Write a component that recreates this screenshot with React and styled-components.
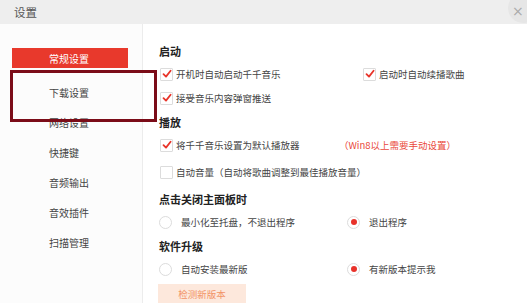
import React from 'react';
import styled, { createGlobalStyle } from 'styled-components';

const GlobalStyle = createGlobalStyle`
    html, body {
        margin: 0;
        padding: 0;
        background: #ffffff;
    }
    body {
        font-family: "Noto Sans CJK SC", "Noto Sans", sans-serif;
        color: #333;
    }
`;

const navItems = ['常规设置', '下载设置', '网络设置', '快捷键', '音频输出', '音效插件', '扫描管理'];

const Check = ({ checked }) => (
    <CheckBox>
        {checked && (
            <svg width="10" height="10" viewBox="0 0 10 10">
                <path d="M1.5 5.2 L4 7.6 L8.6 1.8" fill="none" stroke="#e8342a" strokeWidth="1.8" strokeLinecap="round" strokeLinejoin="round" />
            </svg>
        )}
    </CheckBox>
);

const Radio = ({ checked }) => (
    <RadioDot>{checked && <RadioInner />}</RadioDot>
);

const App = () => {
    return (
        <>
            <GlobalStyle />
            <Window>
                <TitleBar>
                    <Title>设置</Title>
                    <CloseButton>×</CloseButton>
                </TitleBar>
                <Body>
                    <Sidebar>
                        {navItems.map((item, index) => (
                            <NavItem key={item} $active={index === 0}>{item}</NavItem>
                        ))}
                    </Sidebar>
                    <Content>
                        <Heading>启动</Heading>
                        <Row $col={203}>
                            <Option><Check checked /><Label>开机时自动启动千千音乐</Label></Option>
                            <Option><Check checked /><Label>启动时自动续播歌曲</Label></Option>
                        </Row>
                        <Row>
                            <Option><Check checked /><Label>接受音乐内容弹窗推送</Label></Option>
                        </Row>

                        <Heading>播放</Heading>
                        <Row $col={180}>
                            <Option><Check checked /><Label>将千千音乐设置为默认播放器</Label></Option>
                            <Note>（Win8以上需要手动设置）</Note>
                        </Row>
                        <Row $h={30}>
                            <Option><Check /><Label>自动音量（自动将歌曲调整到最佳播放音量）</Label></Option>
                        </Row>

                        <Heading>点击关闭主面板时</Heading>
                        <Row $col={188}>
                            <Option><Radio /><RadioLabel>最小化至托盘，不退出程序</RadioLabel></Option>
                            <Option><Radio checked /><RadioLabel>退出程序</RadioLabel></Option>
                        </Row>

                        <Heading>软件升级</Heading>
                        <Row $col={188}>
                            <Option><Radio /><RadioLabel>自动安装最新版</RadioLabel></Option>
                            <Option><Radio checked /><RadioLabel>有新版本提示我</RadioLabel></Option>
                        </Row>
                        <CheckButton>检测新版本</CheckButton>
                    </Content>
                    <Highlight />
                </Body>
            </Window>
        </>
    );
};

export default App;

const Window = styled.div`
    width: 527px;
    height: 303px;
    overflow: hidden;
    display: flex;
    flex-direction: column;
    background: #ffffff;
`;

const TitleBar = styled.div`
    height: 24px;
    flex-shrink: 0;
    display: flex;
    align-items: center;
    justify-content: space-between;
    background: #eeeeee;
    overflow: hidden;
`;

const Title = styled.div`
    padding-left: 14px;
    font-size: 11.5px;
    color: #555;
`;

const CloseButton = styled.div`
    width: 30px;
    height: 30px;
    margin-right: -11px;
    margin-top: -8px;
    border-radius: 50%;
    background: #e6e6e6;
    color: #aaa;
    font-size: 14px;
    line-height: 30px;
    padding-left: 4px;
    padding-top: 3px;
    box-sizing: border-box;
    font-family: "DejaVu Sans", sans-serif;
`;

const Body = styled.div`
    position: relative;
    flex: 1;
    display: flex;
    min-height: 0;
`;

const Sidebar = styled.div`
    width: 143px;
    flex-shrink: 0;
    padding: 24px 0 0 12px;
    box-sizing: border-box;
    background: #fcfcfc;
    border-right: 1px solid #ececec;
`;

const NavItem = styled.div`
    width: 116px;
    height: ${p => (p.$active ? '20px' : '30px')};
    margin-bottom: ${p => (p.$active ? '9px' : '0')};
    padding-left: 37px;
    box-sizing: border-box;
    display: flex;
    align-items: center;
    font-size: 10px;
    color: ${p => (p.$active ? '#ffffff' : '#444')};
    background: ${p => (p.$active ? '#e8392c' : 'transparent')};
`;

const Content = styled.div`
    flex: 1;
    padding: 19px 0 0 16px;
    display: flex;
    flex-direction: column;
`;

const Heading = styled.div`
    height: 16px;
    line-height: 16px;
    margin: 4px 0 3px;
    font-size: 11px;
    font-weight: bold;
    color: #222;

    &:first-child {
        margin-top: 0;
    }
`;

const Row = styled.div`
    height: ${p => p.$h || 24}px;
    flex-shrink: 0;
    display: grid;
    grid-template-columns: ${p => (p.$col ? `${p.$col}px auto` : 'auto')};
    align-items: center;
`;

const Option = styled.div`
    display: flex;
    align-items: center;
`;

const CheckBox = styled.div`
    width: 11px;
    height: 11px;
    margin-left: 1px;
    border: 1px solid #dcdcdc;
    border-radius: 1px;
    background: #fff;
    display: flex;
    align-items: center;
    justify-content: center;
`;

const Label = styled.span`
    margin-left: 3px;
    font-size: 9.5px;
    color: #444;
    white-space: nowrap;
`;

const RadioLabel = styled(Label)`
    margin-left: 9px;
`;

const RadioDot = styled.div`
    width: 11px;
    height: 11px;
    border: 1px solid #dcdcdc;
    border-radius: 50%;
    background: #fff;
    display: flex;
    align-items: center;
    justify-content: center;
`;

const RadioInner = styled.div`
    width: 6px;
    height: 6px;
    border-radius: 50%;
    background: #e8322a;
`;

const Note = styled.span`
    font-size: 9.5px;
    color: #ea4a3c;
    white-space: nowrap;
`;

const CheckButton = styled.div`
    width: 88px;
    height: 20px;
    flex-shrink: 0;
    margin: 3px 0 0 -1px;
    padding-top: 2px;
    background: #fde8dc;
    color: #f29468;
    font-size: 9.5px;
    line-height: 16px;
    display: flex;
    justify-content: center;
`;

const Highlight = styled.div`
    position: absolute;
    left: 10px;
    top: 46px;
    width: 147px;
    height: 52px;
    box-sizing: border-box;
    border: 3px solid #7b0c18;
    pointer-events: none;
`;
